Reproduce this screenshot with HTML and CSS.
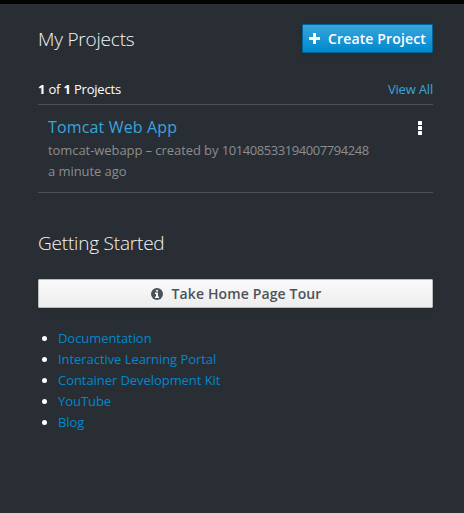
FILE: index.html
```html
<!DOCTYPE html>
<html lang="en">
<head>
<meta charset="utf-8">
<title>My Projects</title>
<link rel="stylesheet" href="styles.css">
</head>
<body>
<aside class="sidebar">
  <header class="head">
    <h2 class="title">My Projects</h2>
    <button class="btn btn-primary"><svg class="plus" viewBox="0 0 11 11"><path d="M4 0h3v4h4v3H7v4H4V7H0V4h4z" fill="currentColor"/></svg><span>Create Project</span></button>
  </header>
  <div class="summary">
    <div><b>1</b> of <b>1</b> Projects</div>
    <a href="#">View All</a>
  </div>
  <article class="project">
    <div>
      <h3 class="name"><a href="#">Tomcat Web App</a></h3>
      <p class="meta">tomcat-webapp – created by <span class="uid">101408533194007794248</span><br>a minute ago</p>
    </div>
    <svg class="kebab" viewBox="0 0 4 14"><rect width="4" height="4" rx=".6"/><rect y="5" width="4" height="4" rx=".6"/><rect y="10" width="4" height="4" rx=".6"/></svg>
  </article>
  <h2 class="title start">Getting Started</h2>
  <button class="btn btn-default"><svg class="info" viewBox="0 0 12 12"><circle cx="6" cy="6" r="6" fill="currentColor"/><path d="M5 2h2v1.6H5zM4 4.6h3V8.5h1V10H4V8.5h1V6H4z" fill="#f5f5f5"/></svg><span>Take Home Page Tour</span></button>
  <ul class="links">
    <li><a href="#">Documentation</a></li>
    <li><a href="#">Interactive Learning Portal</a></li>
    <li><a href="#">Container Development Kit</a></li>
    <li><a href="#">YouTube</a></li>
    <li><a href="#">Blog</a></li>
  </ul>
</aside>
</body>
</html>
```
FILE: styles.css
```css
* { box-sizing: border-box; }
body {
  margin: 0;
  background: #292e34;
  color: #fff;
  font: 13px/21px "Open Sans", sans-serif;
}
a { color: #39a5dc; text-decoration: none; }
h2, h3, p { margin: 0; }
.sidebar {
  height: 513px;
  border-top: 4px solid #030303;
  padding: 20px 31px 0 38px;
}
.head { display: flex; justify-content: space-between; height: 29px; }
.title { font-size: 19px; line-height: 31px; font-weight: 300; letter-spacing: -.2px; color: #f5f5f5; }
.btn {
  display: flex;
  align-items: center;
  justify-content: center;
  height: 29px;
  padding: 0 6px;
  border: 1px solid;
  border-radius: 1px;
  font: 600 14px/21px "Open Sans", sans-serif;
  letter-spacing: .14px;
  box-shadow: 0 2px 3px rgba(3, 3, 3, .1);
}
.btn-primary {
  color: #fff;
  border-color: #00659c;
  background: linear-gradient(#39a5dc, #0088ce);
}
.btn-default {
  width: 100%;
  margin-top: 20px;
  padding-left: 8px;
  color: #4d5258;
  border-color: #bbb;
  background: linear-gradient(#fafafa, #ededed);
}
.plus { width: 11px; height: 11px; margin-right: 8px; }
.info { width: 12px; height: 12px; margin-right: 8px; }
.summary {
  display: flex;
  justify-content: space-between;
  margin-top: 26px;
  padding-bottom: 4px;
  border-bottom: 1px solid #4d5258;
  letter-spacing: -.19px;
}
.project {
  display: flex;
  justify-content: space-between;
  height: 88px;
  padding: 11px 11px 0 10px;
  border-bottom: 1px solid #4d5258;
}
.name { font-size: 16px; line-height: 23px; font-weight: 400; letter-spacing: .15px; }
.meta { margin-top: 1px; color: #8b8d8f; letter-spacing: -.07px; }
.uid { letter-spacing: -.43px; }
.kebab { width: 4px; height: 14px; margin-top: 5px; fill: #fff; }
.start { margin-top: 35px; }
.links { margin: 20px 0 0; padding: 0 0 0 20px; letter-spacing: -.06px; }
.links a { color: #0088ce; }
```
